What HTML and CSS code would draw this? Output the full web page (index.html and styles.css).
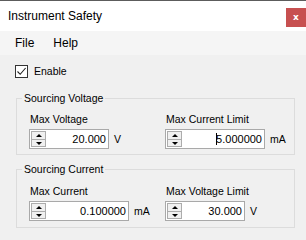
FILE: index.html
```html
<!DOCTYPE html>
<html lang="en">
<head>
  <meta charset="UTF-8" />
  <title>Instrument Safety</title>
  <link rel="stylesheet" href="styles.css">
</head>
<body>
  <div class="window">
    <div class="titlebar">
      <span class="title">Instrument Safety</span>
      <button class="close" title="Close">x</button>
    </div>
    <div class="menubar">
      <span class="menu-item">File</span>
      <span class="menu-item">Help</span>
    </div>

    <div class="content">
      <label class="check-row">
        <span class="checkbox">
          <svg width="11" height="11" viewBox="0 0 11 11"><path d="M1.5 5.5 L4.2 8.3 L9.6 2" fill="none" stroke="#222" stroke-width="1.1"/></svg>
        </span>
        Enable
      </label>

      <fieldset class="group">
        <legend>Sourcing Voltage</legend>
        <div class="row">
          <div class="field">
            <div class="field-label">Max Voltage</div>
            <div class="field-input">
              <div class="spin w80">
                <div class="spin-btns"><span class="up"></span><span class="down"></span></div>
                <span class="spin-value">20.000</span>
              </div>
              <span class="unit">V</span>
            </div>
          </div>
          <div class="field">
            <div class="field-label">Max Current Limit</div>
            <div class="field-input">
              <div class="spin w100">
                <div class="spin-btns"><span class="up"></span><span class="down"></span></div>
                <span class="spin-value"><span class="caret"></span>5.000000</span>
              </div>
              <span class="unit">mA</span>
            </div>
          </div>
        </div>
      </fieldset>

      <fieldset class="group">
        <legend>Sourcing Current</legend>
        <div class="row">
          <div class="field">
            <div class="field-label">Max Current</div>
            <div class="field-input">
              <div class="spin w100">
                <div class="spin-btns"><span class="up"></span><span class="down"></span></div>
                <span class="spin-value">0.100000</span>
              </div>
              <span class="unit">mA</span>
            </div>
          </div>
          <div class="field">
            <div class="field-label">Max Voltage Limit</div>
            <div class="field-input">
              <div class="spin w80">
                <div class="spin-btns"><span class="up"></span><span class="down"></span></div>
                <span class="spin-value">30.000</span>
              </div>
              <span class="unit">V</span>
            </div>
          </div>
        </div>
      </fieldset>
    </div>
  </div>
</body>
</html>
```

FILE: styles.css
```css
body { margin: 0; background: #f0f0f0; font-family: "Liberation Sans", Arial, sans-serif; color: #000; }
.window { width: 306px; height: 240px; border-top: 1px solid #5c5c5c; box-sizing: border-box; overflow: hidden; }

.titlebar { height: 30px; background: #fff; display: flex; align-items: flex-start; justify-content: space-between; }
.title { font-size: 12px; line-height: 30px; padding-left: 8px; }
.close {
  margin-top: 7px; width: 20px; height: 19px; border: none; padding: 0;
  background: #c75050; color: #fff; font-family: "DejaVu Sans", sans-serif;
  font-size: 9px; font-weight: bold; line-height: 17px;
}

.menubar { height: 24px; background: #f5f5f5; display: flex; padding-left: 15px; gap: 19px; }
.menu-item { font-size: 12px; line-height: 24px; }

.content { padding-top: 10px; font-size: 10.5px; }
.check-row { display: flex; align-items: center; gap: 6px; margin-left: 15px; height: 13px; line-height: 13px; }
.checkbox {
  width: 11px; height: 11px; border: 1px solid #333; background: #fff;
  display: flex; align-items: center; justify-content: center;
}

.group {
  margin: 14px 11px 0 16px; padding: 8px 12px 5px 12px;
  border: 1px solid #dcdcdc; min-width: 0;
}
.group + .group { margin-top: 8px; }
.group legend { margin-left: -7px; padding: 0 2px; font-size: 10.5px; line-height: 13px; }
.group:last-child { padding-top: 9px; padding-bottom: 6px; }

.row { display: grid; grid-template-columns: 136px 1fr; }
.field-label { line-height: 13px; margin-left: 1px; margin-bottom: 3px; }
.field-input { display: flex; align-items: center; }
.unit { margin-left: 5px; }

.spin {
  height: 20px; box-sizing: border-box; border: 1px solid #a9a9a9; background: #fff;
  display: flex; align-items: stretch;
}
.w80 { width: 80px; }
.w100 { width: 100px; }
.spin-btns { width: 15px; display: flex; flex-direction: column; padding: 1px 0 1px 1px; }
.spin-btns span {
  flex: 1; background: #f0f0f0; border: 1px solid #acacac; position: relative;
}
.spin-btns .up { border-bottom: none; }
.spin-btns .up::after, .spin-btns .down::after {
  content: ""; position: absolute; left: 4px; width: 0; height: 0;
  border-left: 3px solid transparent; border-right: 3px solid transparent;
}
.spin-btns .up::after { top: 2px; border-bottom: 3px solid #000; }
.spin-btns .down::after { top: 2px; border-top: 3px solid #000; }
.spin-value { flex: 1; text-align: right; padding-right: 2px; line-height: 18px; font-size: 11px; position: relative; }
.caret { display: inline-block; width: 1px; height: 12px; background: #000; vertical-align: -2px; margin-right: -1px; }
```
